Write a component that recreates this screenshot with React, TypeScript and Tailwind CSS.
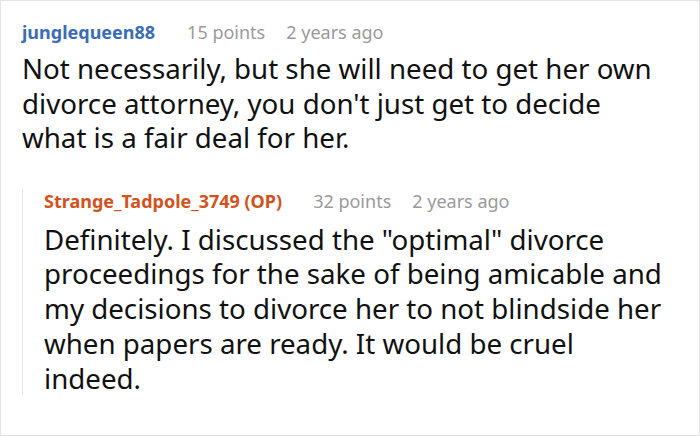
export default function App() {
  return (
    <div className="w-[700px] h-[436px] overflow-hidden border border-[#e4e4e4] bg-white pl-[21px] pr-[27px] pt-[19px] font-['Noto_Sans',sans-serif]">
      <div className="flex items-center gap-[32px] text-[18px] leading-[24px]">
        <span className="font-bold text-[#3a6db5]">junglequeen88</span>
        <div className="flex gap-[21px] text-[#9a9a9a]">
          <span>15 points</span>
          <span>2 years ago</span>
        </div>
      </div>
      <p className="mt-[7px] text-[27.7px] leading-[34.5px] text-[#111]">
        Not necessarily, but she will need to get her own divorce attorney, you don't just get to decide what is a fair deal for her.
      </p>

      {/* reply thread: the rule starts a little below the header top */}
      <div className="mt-[44px] border-l border-[#e4e4e4] pl-[21px]">
        <div className="-mt-[10px] flex items-center gap-[31px] text-[18px] leading-[24px]">
          <span className="font-bold text-[#d4521b]">Strange_Tadpole_3749 (OP)</span>
          <div className="flex gap-[21px] text-[#9a9a9a]">
            <span>32 points</span>
            <span>2 years ago</span>
          </div>
        </div>
        <p className="mt-[9px] -mb-[12px] text-[27.7px] leading-[34.8px] text-[#111]">
          Definitely. I discussed the "optimal" divorce proceedings for the sake of being amicable and my decisions to divorce her to not blindside her when papers are ready. It would be cruel indeed.
        </p>
      </div>
    </div>
  );
}
